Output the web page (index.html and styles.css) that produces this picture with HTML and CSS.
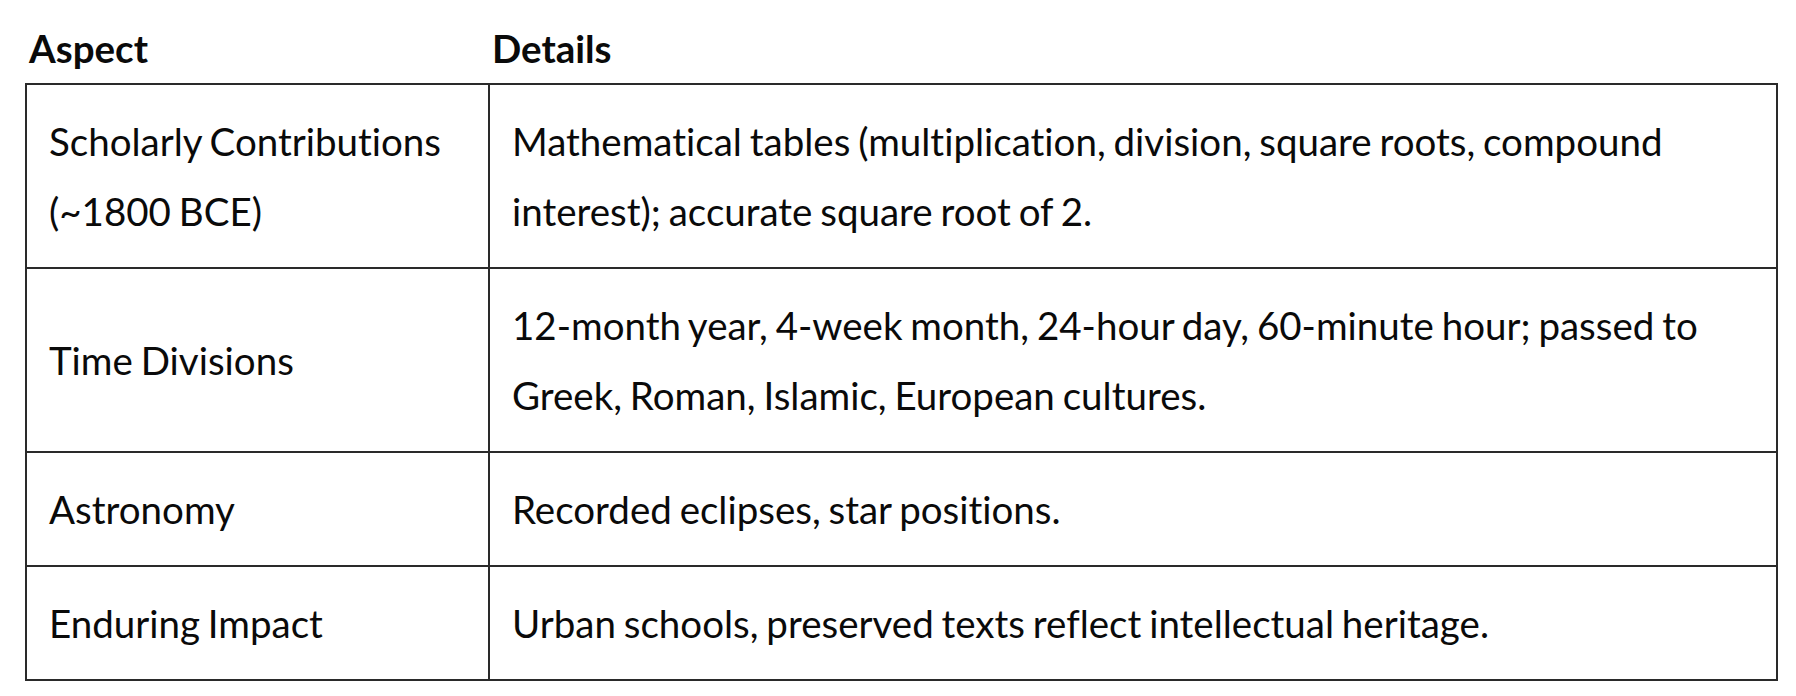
FILE: index.html
```html
<!DOCTYPE html>
<html lang="en">
<head>
<meta charset="utf-8">
<title>Aspects</title>
<link rel="stylesheet" href="styles.css">
</head>
<body>
<div class="page">
  <table class="info">
    <thead>
      <tr>
        <th class="col-aspect">Aspect</th>
        <th>Details</th>
      </tr>
    </thead>
    <tbody>
      <tr>
        <td>Scholarly Contributions (~1800 BCE)</td>
        <td>Mathematical tables (multiplication, division, square roots, compound interest); accurate square root of 2.</td>
      </tr>
      <tr>
        <td>Time Divisions</td>
        <td>12-month year, 4-week month, 24-hour day, 60-minute hour; passed to Greek, Roman, Islamic, European cultures.</td>
      </tr>
      <tr>
        <td>Astronomy</td>
        <td>Recorded eclipses, star positions.</td>
      </tr>
      <tr>
        <td>Enduring Impact</td>
        <td>Urban schools, preserved texts reflect intellectual heritage.</td>
      </tr>
    </tbody>
  </table>
</div>
</body>
</html>
```
FILE: styles.css
```css
html, body {
  margin: 0;
  padding: 0;
  background: #ffffff;
}

.page {
  padding: 13px 18px 0 25px;
  font-family: Lato, "Noto Sans", sans-serif;
  color: #0a0a0a;
}

.info {
  width: 1753px;
  border-collapse: collapse;
  font-size: 38.5px;
  line-height: 70px;
  word-spacing: -2px;
  font-variant-ligatures: none;
}

.info th {
  text-align: left;
  font-weight: 700;
  padding: 0 3px;
  border: none;
}

.info th.col-aspect {
  width: 457px;
}

.info td {
  border: 2px solid #2a2a2a;
  padding: 21px 22px;
  vertical-align: middle;
  text-align: left;
}
```
